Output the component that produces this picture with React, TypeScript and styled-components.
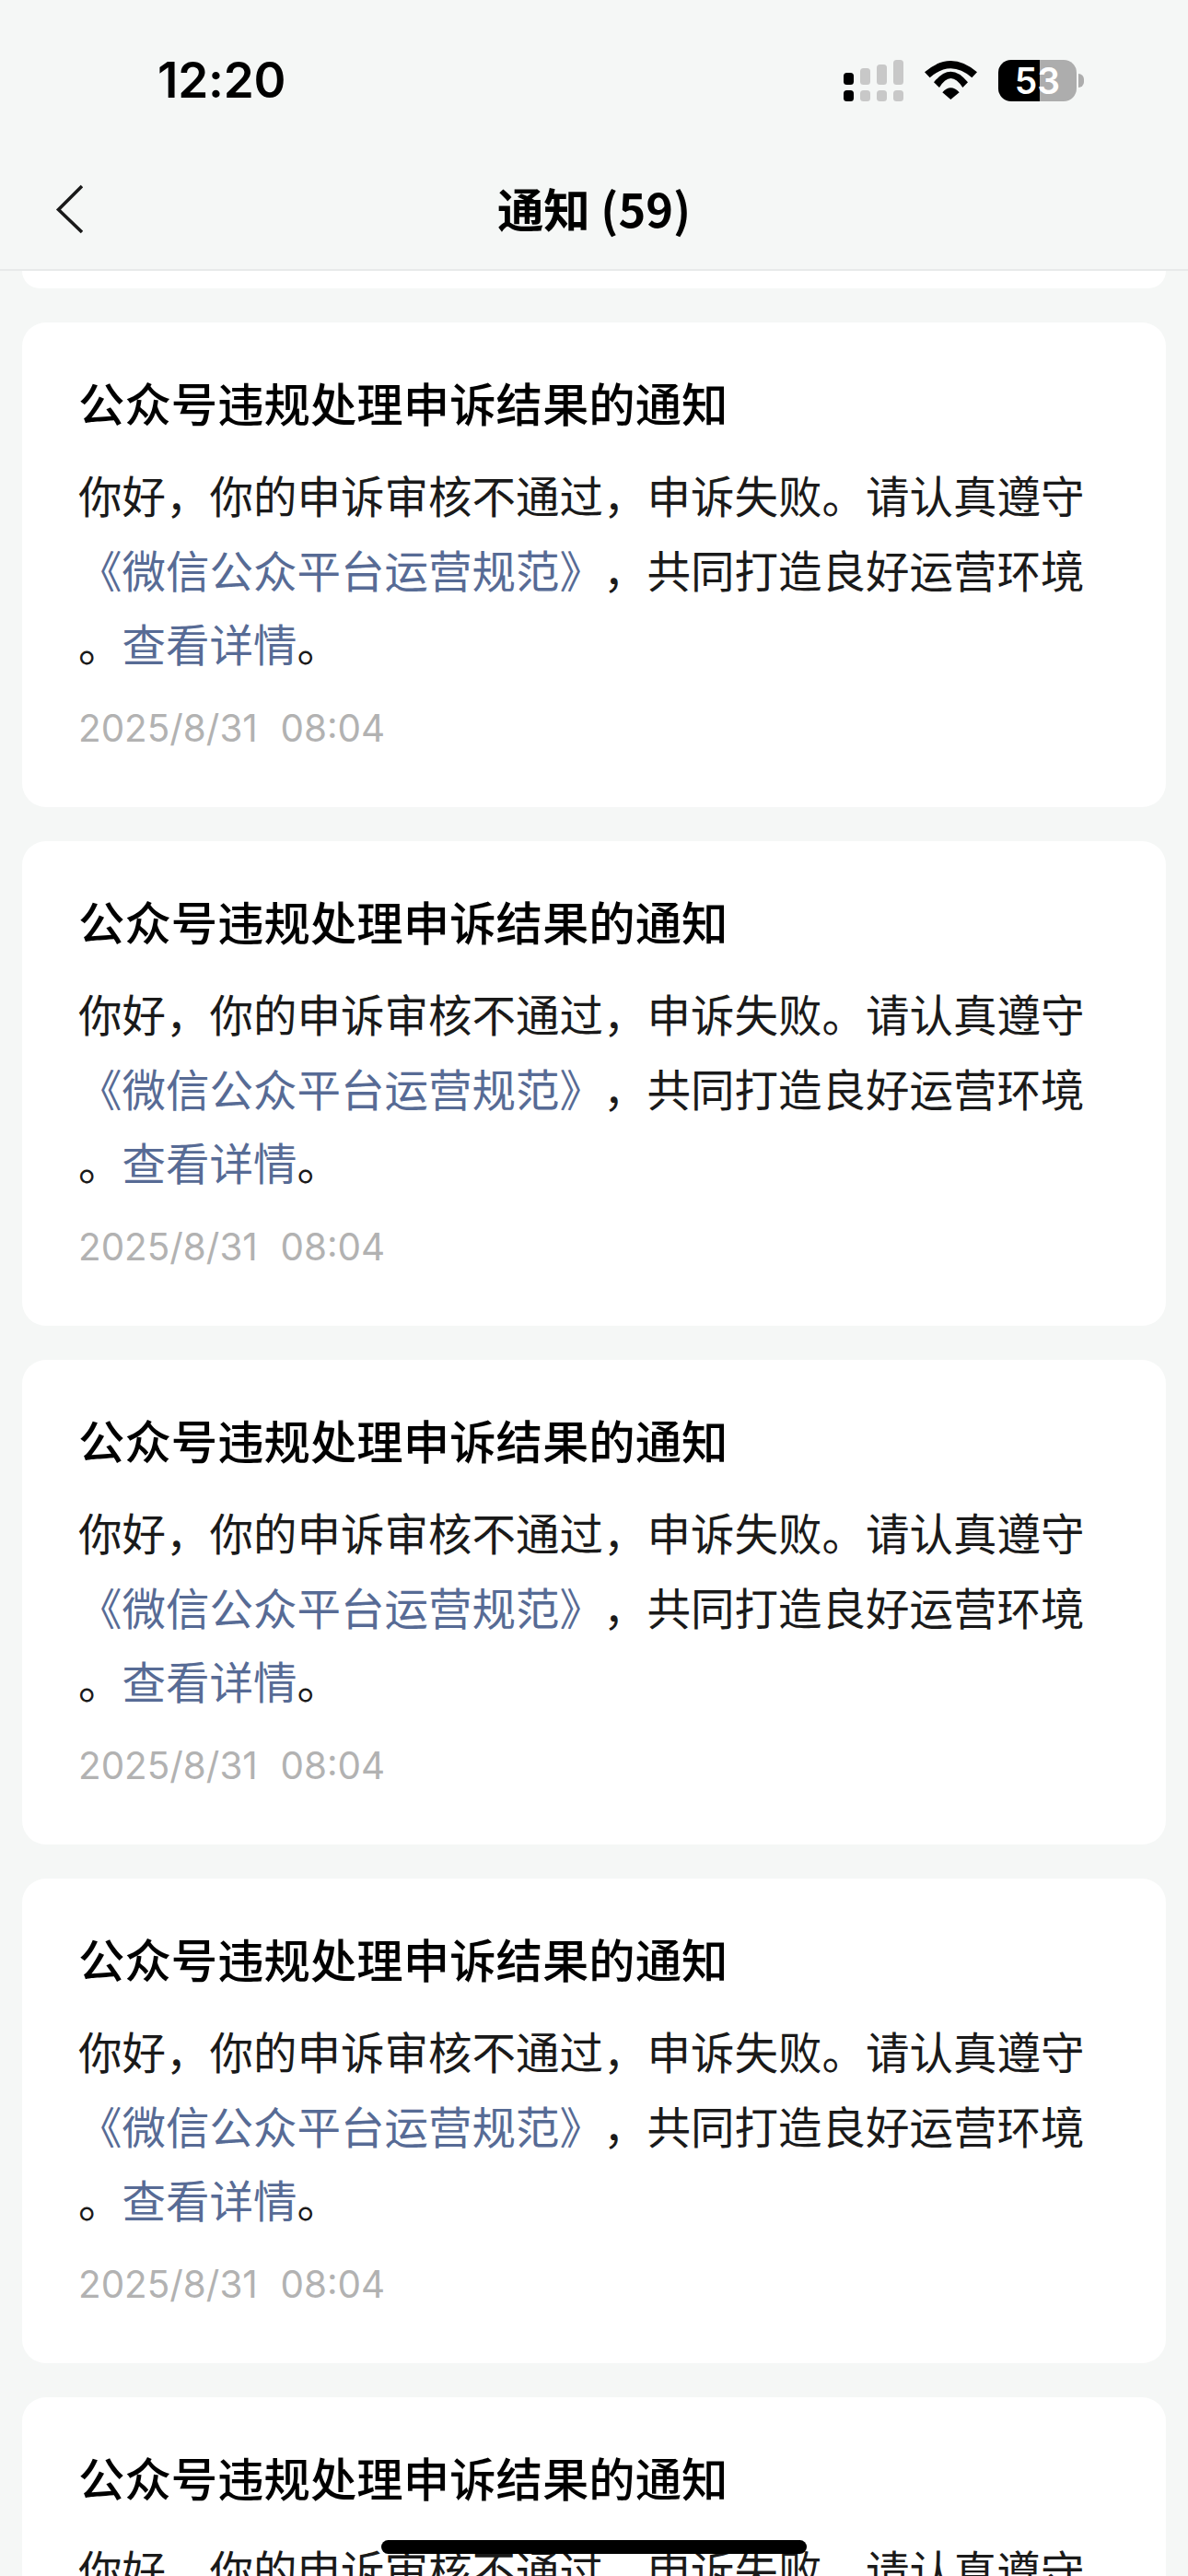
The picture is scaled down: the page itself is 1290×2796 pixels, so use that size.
import React from 'react'
import styled, { createGlobalStyle } from 'styled-components'

const GlobalStyle = createGlobalStyle`
  html, body {
    margin: 0;
    padding: 0;
    background: #f5f7f6;
  }
  * {
    box-sizing: border-box;
  }
`

const CJK = `"Noto Sans CJK SC", "Noto Sans", sans-serif`
const LATIN = `Inter, "Noto Sans CJK SC", sans-serif`

const COMMA = '\uFF0C'

const Page = styled.div`
  position: relative;
  width: 1290px;
  height: 2796px;
  overflow: hidden;
  background: #f5f7f6;
  font-family: ${CJK};
`

const Header = styled.header`
  border-bottom: 2px solid #e8eaea;
`

const StatusBar = styled.div`
  height: 174px;
  padding: 0 113px 0 171px;
  display: flex;
  align-items: center;
  justify-content: space-between;
`

const Clock = styled.span`
  font-family: ${LATIN};
  font-size: 53px;
  font-weight: 600;
  letter-spacing: -0.2px;
  color: #000;
`

const StatusIcons = styled.div`
  display: flex;
  align-items: center;
  gap: 23px;
`

const Battery = styled.div`
  position: relative;
  width: 85px;
  height: 45px;
  margin-right: 8px;
  border-radius: 14px;
  background: linear-gradient(90deg, #000 0, #000 45px, #adadad 45px, #adadad 100%);
  color: #fff;
  font-family: ${LATIN};
  font-size: 39px;
  font-weight: 600;
  line-height: 45px;
  text-align: center;

  &::after {
    content: '';
    position: absolute;
    right: -8px;
    top: 15px;
    width: 6px;
    height: 15px;
    border-radius: 0 6px 6px 0;
    background: #adadad;
  }
`

const NavBar = styled.div`
  position: relative;
  height: 118px;
  padding-bottom: 17px;
  display: flex;
  align-items: center;
  justify-content: center;
`

const BackIcon = styled.svg`
  position: absolute;
  left: 60px;
  top: 26px;
`

const NavTitle = styled.h1`
  margin: 0;
  font-family: ${CJK};
  font-size: 50.5px;
  font-weight: 600;
  color: #000;
`

const List = styled.main`
  display: flex;
  flex-direction: column;
  gap: 37px;
  padding: 0 24px;
`

const PeekCard = styled.div`
  height: 19px;
  background: #fff;
  border-radius: 0 0 24px 24px;
`

const Card = styled.article`
  flex: none;
  height: 526px;
  padding: 47px 61px 0;
  background: #fff;
  border-radius: 26px;
`

const CardTitle = styled.h2`
  margin: 0 0 20px;
  font-size: 50.4px;
  line-height: 80px;
  font-weight: 500;
  color: #000;
  white-space: nowrap;
`

const CardBody = styled.p`
  margin: 0;
  font-size: 47.5px;
  line-height: 80.5px;
  color: #1a1a1a;
  line-break: anywhere;
  text-spacing-trim: space-all;
`

const Link = styled.span`
  color: #576b95;
`

const CardTime = styled.time`
  display: block;
  margin-top: 22px;
  font-family: ${LATIN};
  font-size: 40.4px;
  line-height: 60px;
  word-spacing: 1px;
  color: #b2b2b2;
  white-space: pre;
`

const HomeIndicator = styled.div`
  position: absolute;
  left: 414px;
  top: 2757px;
  width: 462px;
  height: 15px;
  border-radius: 8px;
  background: #000;
`

function SignalIcon() {
  const columns = [
    { x: 0, top: 14, color: '#000' },
    { x: 18, top: 9, color: '#c8c8c8' },
    { x: 36, top: 5, color: '#c8c8c8' },
    { x: 54, top: 0, color: '#c8c8c8' },
  ]
  return (
    <svg width="65" height="45" viewBox="0 0 65 45">
      {columns.map((c) => (
        <g key={c.x} fill={c.color}>
          <rect x={c.x} y={c.top} width="11" height={27 - c.top} rx="3.5" />
          <rect x={c.x} y="33" width="11" height="12" rx="3.5" />
        </g>
      ))}
    </svg>
  )
}

function WifiIcon() {
  return (
    <svg width="57" height="42" viewBox="432 75 171 126">
      <path d="M432 112Q517 38 603 112L586 130Q517 70 449 130Z" />
      <path d="M462 145Q517 75 573 145L556 162Q517 102 480 162Z" />
      <path d="M490 178Q517 148 545 178L517 201Z" />
    </svg>
  )
}

function NoticeCard() {
  return (
    <Card>
      <CardTitle>公众号违规处理申诉结果的通知</CardTitle>
      <CardBody>
        {`你好${COMMA}你的申诉审核不通过${COMMA}申诉失败。请认真遵守`}
        <Link>《微信公众平台运营规范》</Link>
        {`${COMMA}共同打造良好运营环境。`}
        <Link>查看详情</Link>。
      </CardBody>
      <CardTime>2025/8/31  08:04</CardTime>
    </Card>
  )
}

export default function App() {
  return (
    <Page>
      <GlobalStyle />
      <Header>
        <StatusBar>
          <Clock>12:20</Clock>
          <StatusIcons>
            <SignalIcon />
            <WifiIcon />
            <Battery>53</Battery>
          </StatusIcons>
        </StatusBar>
        <NavBar>
          <BackIcon width="30" height="54" viewBox="0 0 30 54" fill="none">
            <path d="M29 2L3.5 27.5L29 52" stroke="#1a1a1a" strokeWidth="3.6" />
          </BackIcon>
          <NavTitle>通知 (59)</NavTitle>
        </NavBar>
      </Header>
      <List>
        <PeekCard />
        {[0, 1, 2, 3, 4].map((i) => (
          <NoticeCard key={i} />
        ))}
      </List>
      <HomeIndicator />
    </Page>
  )
}
